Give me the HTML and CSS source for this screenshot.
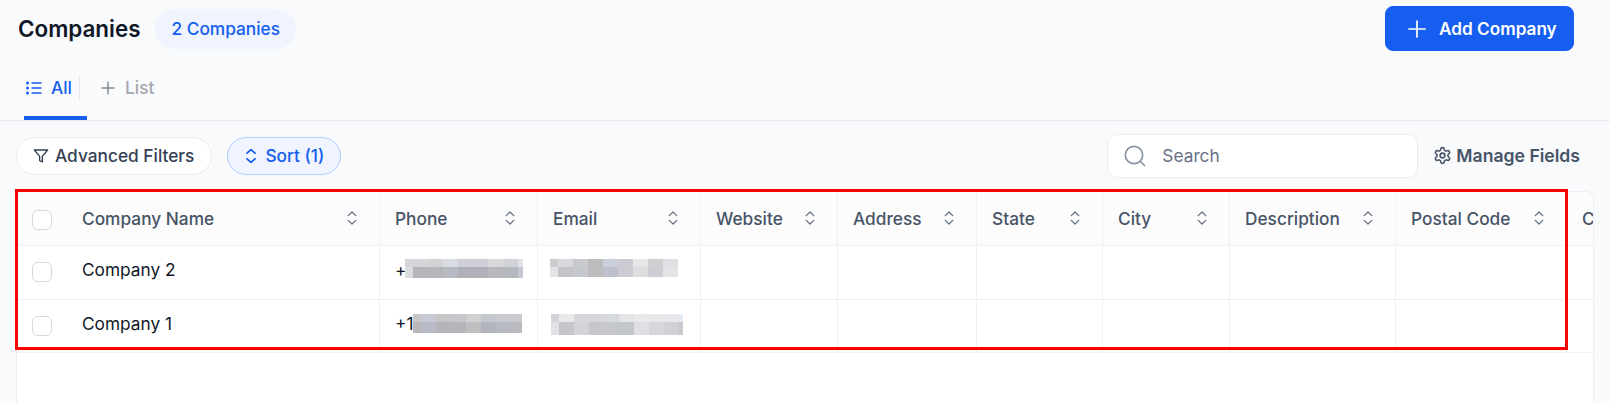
FILE: index.html
```html
<!DOCTYPE html>
<html lang="en">
<head>
  <meta charset="UTF-8">
  <title>Companies</title>
  <meta name="viewport" content="width=device-width, initial-scale=1.0" />
  <link rel="stylesheet" href="styles.css">
</head>
<body>

  <svg class="sprites" aria-hidden="true">
    <symbol id="sort-icon" viewBox="0 0 12 18">
      <path d="M2.2 6.6 6 3l3.8 3.6M2.2 11.4 6 15l3.8-3.6" fill="none" stroke="currentColor" stroke-width="1.2" stroke-linecap="round" stroke-linejoin="round" />
    </symbol>
  </svg>

  <header class="top-bar">
    <div class="title-group">
      <h1>Companies</h1>
      <span class="count-badge">2 Companies</span>
    </div>
    <button class="add-btn">
      <svg class="add-icon" viewBox="0 0 18 18"><path d="M9 1v16M1 9h16" fill="none" stroke="currentColor" stroke-width="1.7" stroke-linecap="round" /></svg>
      Add Company
    </button>
  </header>

  <nav class="tabs">
    <a class="tab tab-active">
      <svg class="tab-icon" viewBox="0 0 16 14">
        <path d="M5.5 2h10M5.5 7h10M5.5 12h10" fill="none" stroke="currentColor" stroke-width="1.7" />
        <circle cx="1.5" cy="2" r="1.5" fill="currentColor" />
        <circle cx="1.5" cy="7" r="1.5" fill="currentColor" />
        <circle cx="1.5" cy="12" r="1.5" fill="currentColor" />
      </svg>
      All
    </a>
    <span class="tab-divider"></span>
    <a class="tab tab-add">
      <svg class="plus-icon" viewBox="0 0 14 14"><path d="M7 .5v13M.5 7h13" fill="none" stroke="currentColor" stroke-width="1.5" /></svg>
      List
    </a>
  </nav>

  <section class="toolbar">
    <div class="toolbar-left">
      <button class="pill">
        <svg class="pill-icon" viewBox="0 0 24 24"><polygon points="22 3 2 3 10 12.46 10 19 14 21 14 12.46 22 3" fill="none" stroke="currentColor" stroke-width="2" stroke-linejoin="round" /></svg>
        Advanced Filters
      </button>
      <button class="pill pill-active">
        <svg class="pill-sort" viewBox="0 0 12 18"><path d="M2 6.2 6 2.6l4 3.6M2 11.8l4 3.6 4-3.6" fill="none" stroke="currentColor" stroke-width="1.8" stroke-linecap="round" stroke-linejoin="round" /></svg>
        Sort (1)
      </button>
    </div>
    <div class="toolbar-right">
      <label class="search-box">
        <svg class="search-icon" viewBox="0 0 22 22"><circle cx="10" cy="10" r="8.7" fill="none" stroke="currentColor" stroke-width="1.7" /><path d="m16.5 16.5 4 4" fill="none" stroke="currentColor" stroke-width="1.7" stroke-linecap="round" /></svg>
        <span>Search</span>
      </label>
      <button class="manage-btn">
        <svg class="gear-icon" viewBox="0 0 24 24" fill="none" stroke="currentColor" stroke-width="2" stroke-linecap="round" stroke-linejoin="round">
          <path d="M12.22 2h-.44a2 2 0 0 0-2 2v.18a2 2 0 0 1-1 1.73l-.43.25a2 2 0 0 1-2 0l-.15-.08a2 2 0 0 0-2.73.73l-.22.38a2 2 0 0 0 .73 2.73l.15.1a2 2 0 0 1 1 1.72v.51a2 2 0 0 1-1 1.74l-.15.09a2 2 0 0 0-.73 2.73l.22.38a2 2 0 0 0 2.73.73l.15-.08a2 2 0 0 1 2 0l.43.25a2 2 0 0 1 1 1.73V20a2 2 0 0 0 2 2h.44a2 2 0 0 0 2-2v-.18a2 2 0 0 1 1-1.73l.43-.25a2 2 0 0 1 2 0l.15.08a2 2 0 0 0 2.73-.73l.22-.39a2 2 0 0 0-.73-2.73l-.15-.08a2 2 0 0 1-1-1.74v-.5a2 2 0 0 1 1-1.74l.15-.09a2 2 0 0 0 .73-2.73l-.22-.38a2 2 0 0 0-2.73-.73l-.15.08a2 2 0 0 1-2 0l-.43-.25a2 2 0 0 1-1-1.73V4a2 2 0 0 0-2-2z" />
          <circle cx="12" cy="12" r="3" />
        </svg>
        Manage Fields
      </button>
    </div>
  </section>

  <div class="table-card">
    <table class="data-table">
      <colgroup>
        <col class="col-check"><col class="col-name"><col class="col-phone"><col class="col-email"><col class="col-website"><col class="col-address"><col class="col-state"><col class="col-city"><col class="col-desc"><col class="col-postal"><col class="col-last">
      </colgroup>
      <thead>
        <tr>
          <th class="check-cell"><span class="checkbox"></span></th>
          <th><div class="th-inner">Company Name <svg class="sort-icon"><use href="#sort-icon" /></svg></div></th>
          <th><div class="th-inner">Phone <svg class="sort-icon"><use href="#sort-icon" /></svg></div></th>
          <th><div class="th-inner">Email <svg class="sort-icon"><use href="#sort-icon" /></svg></div></th>
          <th><div class="th-inner">Website <svg class="sort-icon"><use href="#sort-icon" /></svg></div></th>
          <th><div class="th-inner">Address <svg class="sort-icon"><use href="#sort-icon" /></svg></div></th>
          <th><div class="th-inner">State <svg class="sort-icon"><use href="#sort-icon" /></svg></div></th>
          <th><div class="th-inner">City <svg class="sort-icon"><use href="#sort-icon" /></svg></div></th>
          <th><div class="th-inner">Description <svg class="sort-icon"><use href="#sort-icon" /></svg></div></th>
          <th><div class="th-inner">Postal Code <svg class="sort-icon"><use href="#sort-icon" /></svg></div></th>
          <th><div class="th-inner">Country <svg class="sort-icon"><use href="#sort-icon" /></svg></div></th>
        </tr>
      </thead>
      <tbody>
        <tr>
          <td class="check-cell"><span class="checkbox"></span></td>
          <td>Company 2</td>
          <td class="blur-cell">+<span class="blur blur-phone-2"></span></td>
          <td class="blur-cell"><span class="blur blur-email-2"></span></td>
          <td></td><td></td><td></td><td></td><td></td><td></td><td></td>
        </tr>
        <tr>
          <td class="check-cell"><span class="checkbox"></span></td>
          <td>Company 1</td>
          <td class="blur-cell">+1<span class="blur blur-phone-1"></span></td>
          <td class="blur-cell"><span class="blur blur-email-1"></span></td>
          <td></td><td></td><td></td><td></td><td></td><td></td><td></td>
        </tr>
      </tbody>
    </table>
  </div>

  <div class="highlight"></div>

</body>
</html>
```

FILE: styles.css
```css
* {
  box-sizing: border-box;
}

html,
body {
  height: 100%;
}

body {
  margin: 0;
  overflow: hidden;
  position: relative;
  background-color: #f9fafc;
  font-family: Inter, "Liberation Sans", sans-serif;
  font-size: 17.3px;
  color: #101828;
}

button {
  font-family: inherit;
  font-size: inherit;
}

.sprites {
  display: none;
}

/* Top bar */
.top-bar {
  display: flex;
  justify-content: space-between;
  align-items: flex-start;
  height: 64px;
  padding: 6px 36px 0 18px;
}

.title-group {
  display: flex;
  align-items: center;
  gap: 15px;
  height: 45px;
}

h1 {
  margin: 0;
  font-size: 22.4px;
  font-weight: 600;
  color: #101828;
}

.count-badge {
  display: flex;
  align-items: center;
  height: 40px;
  padding: 0 16px;
  border-radius: 20px;
  background-color: #eff4ff;
  color: #155eef;
  font-weight: 500;
}

.add-btn {
  display: flex;
  align-items: center;
  gap: 13px;
  width: 189px;
  height: 45px;
  padding: 0 0 0 22px;
  border: 1px solid #155eef;
  border-radius: 8px;
  background-color: #155eef;
  color: white;
  font-size: 17.2px;
  font-weight: 600;
}

.add-icon {
  width: 18px;
  height: 18px;
}

/* Tabs */
.tabs {
  display: flex;
  align-items: center;
  height: 57px;
  padding-left: 24px;
  border-bottom: 1px solid #e9ebf0;
}

.tab {
  display: flex;
  align-items: center;
  height: 100%;
}

.tab-active {
  width: 63px;
  gap: 9px;
  padding: 0 0 5px 2px;
  border-bottom: 4px solid #155eef;
  color: #155eef;
  font-weight: 500;
}

.tab-icon {
  width: 16px;
  height: 14px;
}

.tab-divider {
  width: 1px;
  height: 25px;
  margin: 0 0 9px -8px;
  background-color: #e4e7ec;
}

.tab-add {
  gap: 10px;
  margin-left: 21px;
  padding-bottom: 9px;
  color: #a4a7ae;
  font-weight: 500;
}

.plus-icon {
  width: 14px;
  height: 14px;
  color: #858a94;
}

/* Toolbar */
.toolbar {
  display: flex;
  justify-content: space-between;
  align-items: center;
  height: 70px;
  padding: 0 30px 0 16px;
}

.toolbar-left,
.toolbar-right {
  display: flex;
  align-items: center;
}

.toolbar-left {
  gap: 15px;
}

.toolbar-right {
  gap: 15px;
}

.pill {
  display: flex;
  align-items: center;
  gap: 6px;
  height: 38px;
  padding: 0 17px 1px 16px;
  border: 1px solid #eaecf0;
  border-radius: 19px;
  background-color: white;
  color: #344054;
  font-weight: 500;
}

.pill-active {
  gap: 8px;
  padding: 0 16px 1px 17px;
  border-color: #b2ccff;
  background-color: #eff4ff;
  color: #155eef;
}

.pill-icon {
  width: 16px;
  height: 16px;
}

.pill-sort {
  width: 12px;
  height: 18px;
}

.search-box {
  display: flex;
  align-items: center;
  gap: 16px;
  width: 311px;
  height: 44px;
  padding: 0 0 1px 16px;
  border: 1px solid #eaecf0;
  border-radius: 10px;
  background-color: white;
  color: #667085;
}

.search-icon {
  width: 22px;
  height: 22px;
  color: #8a93a3;
}

.manage-btn {
  display: flex;
  align-items: center;
  gap: 4px;
  padding: 0 0 1px;
  border: none;
  background: none;
  color: #475467;
  font-size: 17.6px;
  font-weight: 600;
}

.gear-icon {
  width: 19px;
  height: 19px;
}

/* Table */
.table-card {
  height: 240px;
  margin: 0 16px;
  overflow: hidden;
  border: 1px solid #eceef3;
  border-bottom: none;
  border-radius: 8px 8px 0 0;
  background-color: white;
}

.data-table {
  table-layout: fixed;
  width: 1910px;
  border-collapse: separate;
  border-spacing: 0;
}

.col-check { width: 50px; }
.col-name { width: 313px; }
.col-phone { width: 158px; }
.col-email { width: 163px; }
.col-website { width: 137px; }
.col-address { width: 139px; }
.col-state { width: 126px; }
.col-city { width: 127px; }
.col-desc { width: 166px; }
.col-postal { width: 171px; }
.col-last { width: 360px; }

th,
td {
  height: 53px;
  padding: 0 20px 0 15px;
  border-right: 1px solid #f0f1f5;
  border-bottom: 1px solid #f0f1f5;
  text-align: left;
  font-weight: 400;
  position: relative;
}

th {
  height: 54px;
  padding-bottom: 1px;
  background-color: #fcfcfd;
  color: #475467;
  font-weight: 500;
}

tbody tr:first-child td {
  height: 54px;
}

td {
  padding-bottom: 6px;
}

.check-cell {
  padding: 0 0 1px 15px;
  border-right: none;
}

th.check-cell {
  padding: 3px 0 0 15px;
}

.checkbox {
  display: block;
  width: 20px;
  height: 20px;
  border: 1px solid #d5d9e2;
  border-radius: 6px;
  background-color: white;
}

.th-inner {
  display: flex;
  justify-content: space-between;
  align-items: center;
  white-space: nowrap;
}

.sort-icon {
  flex: none;
  width: 12px;
  height: 18px;
  margin-right: 1.5px;
  color: #5f6b80;
}

/* Blurred values, hard stops copy the mosaic of the screenshot */
.blur {
  position: absolute;
  background-repeat: no-repeat;
  background-position: 0 0, 0 8px;
}

.blur-phone-2 {
  left: 25px;
  top: 13px;
  width: 118px;
  height: 19px;
  background-size: 100% 8px, 100% 11px;
  background-image:
    linear-gradient(90deg, #d5d6da 0 23px, #d3d3d5 23px 38px, #d8dce0 38px 53px, #cfd0d5 53px 83px, #d8d8da 83px 98px, #d2d3d7 98px 113px, #e0e2e6 113px),
    linear-gradient(90deg, #dcdde2 0 8px, #b6b5b9 8px 38px, #b8bac3 38px 53px, #afb0b8 53px 83px, #b9b9bd 83px 98px, #b5b7bf 98px 113px, #c3c7d2 113px);
}

.blur-phone-1 {
  left: 33px;
  top: 14px;
  width: 109px;
  height: 19px;
  background-size: 100% 8px, 100% 11px;
  background-image:
    linear-gradient(90deg, #c9c6cb 0 8px, #c8cbd6 8px 23px, #c6c5c8 23px 38px, #c5c7cd 38px 53px, #d1d1d3 53px 68px, #c4c7cd 68px 83px, #c9cbd1 83px 98px, #cbcbcf 98px),
    linear-gradient(90deg, #b9b6b9 0 8px, #b8bac6 8px 23px, #b5b4b8 23px 53px, #bfbfc1 53px 68px, #b3b5bd 68px 83px, #b7bac2 83px 98px, #bbbbbf 98px);
}

.blur-email-2 {
  left: 12px;
  top: 13px;
  width: 128px;
  height: 18px;
  background-size: 100% 8px, 100% 10px;
  background-image:
    linear-gradient(90deg, #cdcdd0 0 8px, #d8d9dd 8px 23px, #c9cacd 23px 38px, #bcbbbd 38px 53px, #cbd1da 53px 68px, #cbcbd1 68px 83px, #e6e6e9 83px 98px, #d0d0d3 98px 113px, #dfe0e4 113px),
    linear-gradient(90deg, #e3e4e6 0 8px, #c5c5c9 8px 23px, #c5c8cc 23px 38px, #bcbcbe 38px 53px, #bec1cb 53px 68px, #cccdd2 68px 83px, #dddde0 83px 98px, #cdced3 98px 113px, #e2e3e5 113px);
}

.blur-email-1 {
  left: 13px;
  top: 14px;
  width: 132px;
  height: 21px;
  background-size: 100% 8px, 100% 13px;
  background-image:
    linear-gradient(90deg, #d4d5da 0 8px, #e9e9ea 8px 23px, #d6d7db 23px 53px, #d6d9dd 53px 68px, #e5e5e8 68px 83px, #e9e9ec 83px 98px, #e7e6e9 98px 113px, #e6e7ea 113px 128px, #e4ebf4 128px),
    linear-gradient(90deg, #e0e2e7 0 8px, #c5c6ca 8px 23px, #d3d4d8 23px 38px, #c6c7cb 38px 68px, #c3c6cb 68px 83px, #dfe0e3 83px 98px, #d5d7dd 98px 113px, #d1d1d5 113px 128px, #c9c8cc 128px);
}

/* Red annotation box */
.highlight {
  position: absolute;
  left: 15px;
  top: 189px;
  width: 1553px;
  height: 161px;
  border: 3px solid #ff0000;
  pointer-events: none;
}
```
